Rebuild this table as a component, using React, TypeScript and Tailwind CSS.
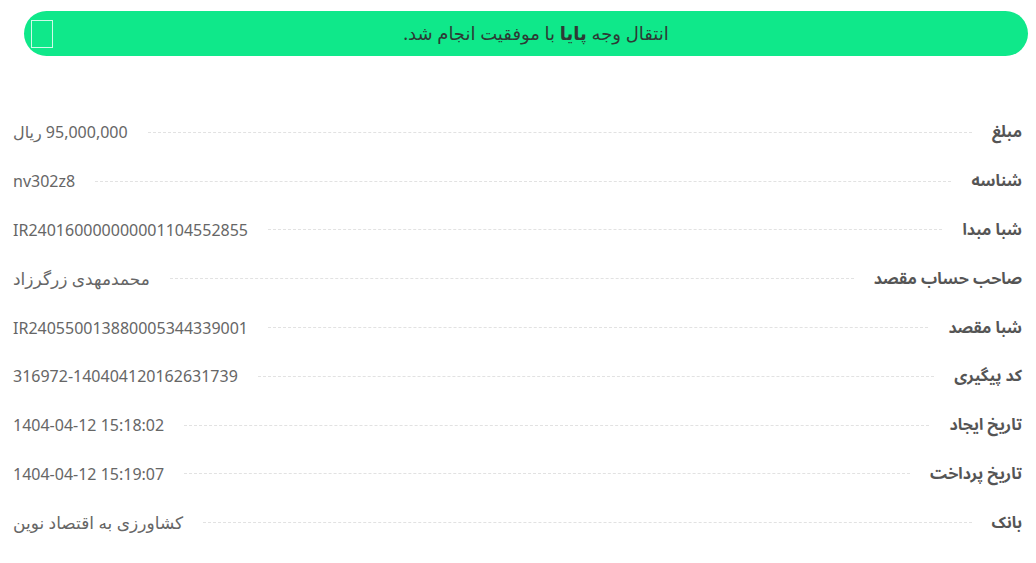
const rows: [string, string][] = [
  ['مبلغ', '95,000,000 ریال'],
  ['شناسه', 'nv302z8'],
  ['شبا مبدا', 'IR240160000000001104552855'],
  ['صاحب حساب مقصد', 'محمدمهدی زرگرزاد'],
  ['شبا مقصد', 'IR240550013880005344339001'],
  ['کد پیگیری', '316972-140404120162631739'],
  ['تاریخ ایجاد', '1404-04-12 15:18:02'],
  ['تاریخ پرداخت', '1404-04-12 15:19:07'],
  ['بانک', 'کشاورزی به اقتصاد نوین'],
];

// values written only in Persian render a touch larger
const isPersian = (s: string) => /^[\u0600-\u06FF\s]+$/.test(s);

export default function App() {
  return (
    <div
      dir="rtl"
      className="min-h-screen bg-white font-['Noto_Sans_Arabic','DejaVu_Sans',sans-serif]"
    >
      <div className="pt-[11px] pl-[24px] pr-[8px]">
        {/* Success banner */}
        <div className="relative flex h-[45px] items-center justify-center rounded-full bg-[#0fe88a] pl-[20px]">
          <p className="font-['Noto_Sans','DejaVu_Sans',sans-serif] text-[18px] text-[#2d3a35]">
            انتقال وجه <span className="font-bold">پایا</span> با موفقیت انجام شد.
          </p>
          <span className="absolute left-[7px] top-[9px] h-[28px] w-[22px] border border-white/80" />
        </div>
      </div>

      {/* Details */}
      <dl className="mt-[52px] pl-[13px] pr-[14px]">
        {rows.map(([label, value]) => (
          <div key={label} className="flex h-[48.8px] items-center gap-5">
            <dt className="text-[16px] font-bold text-[#555]">{label}</dt>
            <span className="flex-1 border-t border-dashed border-[#e2e2e2]" />
            <dd
              className={
                isPersian(value)
                  ? "font-['Noto_Sans','DejaVu_Sans',sans-serif] text-[17px] text-[#666]"
                  : "font-['Noto_Sans','DejaVu_Sans',sans-serif] text-[16px] text-[#666]"
              }
            >
              <bdi>{value}</bdi>
            </dd>
          </div>
        ))}
      </dl>
    </div>
  );
}
